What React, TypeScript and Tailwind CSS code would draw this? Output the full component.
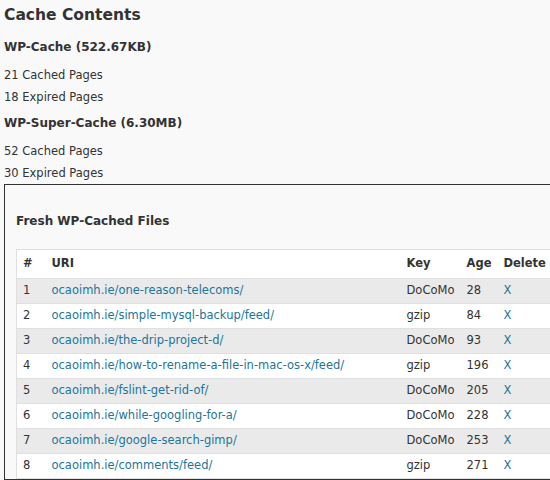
const rows: [string, string, string][] = [
  ["one-reason-telecoms/", "DoCoMo", "28"],
  ["simple-mysql-backup/feed/", "gzip", "84"],
  ["the-drip-project-d/", "DoCoMo", "93"],
  ["how-to-rename-a-file-in-mac-os-x/feed/", "gzip", "196"],
  ["fslint-get-rid-of/", "DoCoMo", "205"],
  ["while-googling-for-a/", "DoCoMo", "228"],
  ["google-search-gimp/", "DoCoMo", "253"],
  ["comments/feed/", "gzip", "271"],
];

export default function App() {
  return (
    <div className="w-[550px] h-[480px] overflow-hidden bg-[#f9f9f9] text-[#333] text-[11.5px]" style={{ fontFamily: '"DejaVu Sans", sans-serif' }}>
      <div className="pl-[4px] pt-[3px]">
        <h2 className="text-[15.5px] font-bold leading-[24px]">Cache Contents</h2>
        <h3 className="text-[12px] font-bold mt-[11px] leading-[18px]">WP-Cache (522.67KB)</h3>
        <p className="mt-[8px] leading-[22px]">21 Cached Pages<br />18 Expired Pages</p>
        <h3 className="text-[12px] font-bold mt-[6px] leading-[18px]">WP-Super-Cache (6.30MB)</h3>
        <p className="mt-[8px] leading-[22px]">52 Cached Pages<br />30 Expired Pages</p>
      </div>
      <div className="ml-[4px] mt-[0px] w-[560px] border border-[#333] pl-[11px] pt-[27px]">
        <h3 className="text-[12px] font-bold leading-[18px]">Fresh WP-Cached Files</h3>
        <table className="mt-[19px] w-[545px] table-fixed border border-[#dfdfdf] border-collapse bg-white">
          <thead>
            <tr className="h-[29px] font-bold text-left">
              <th className="pl-[6px] w-[35px]">#</th>
              <th className="w-[355px]">URI</th>
              <th className="w-[60px]">Key</th>
              <th className="w-[37px]">Age</th>
              <th>Delete</th>
            </tr>
          </thead>
          <tbody>
            {rows.map((r, i) => (
              <tr key={i} className={`h-[25px] border-t border-[#dfdfdf] ${i % 2 === 0 ? "bg-[#eaeaea]" : "bg-white"}`}>
                <td className="pl-[6px]">{i + 1}</td>
                <td className="text-[#21759b]">ocaoimh.ie/{r[0]}</td>
                <td>{r[1]}</td>
                <td>{r[2]}</td>
                <td className="text-[#21759b]">X</td>
              </tr>
            ))}
          </tbody>
        </table>
      </div>
    </div>
  );
}
